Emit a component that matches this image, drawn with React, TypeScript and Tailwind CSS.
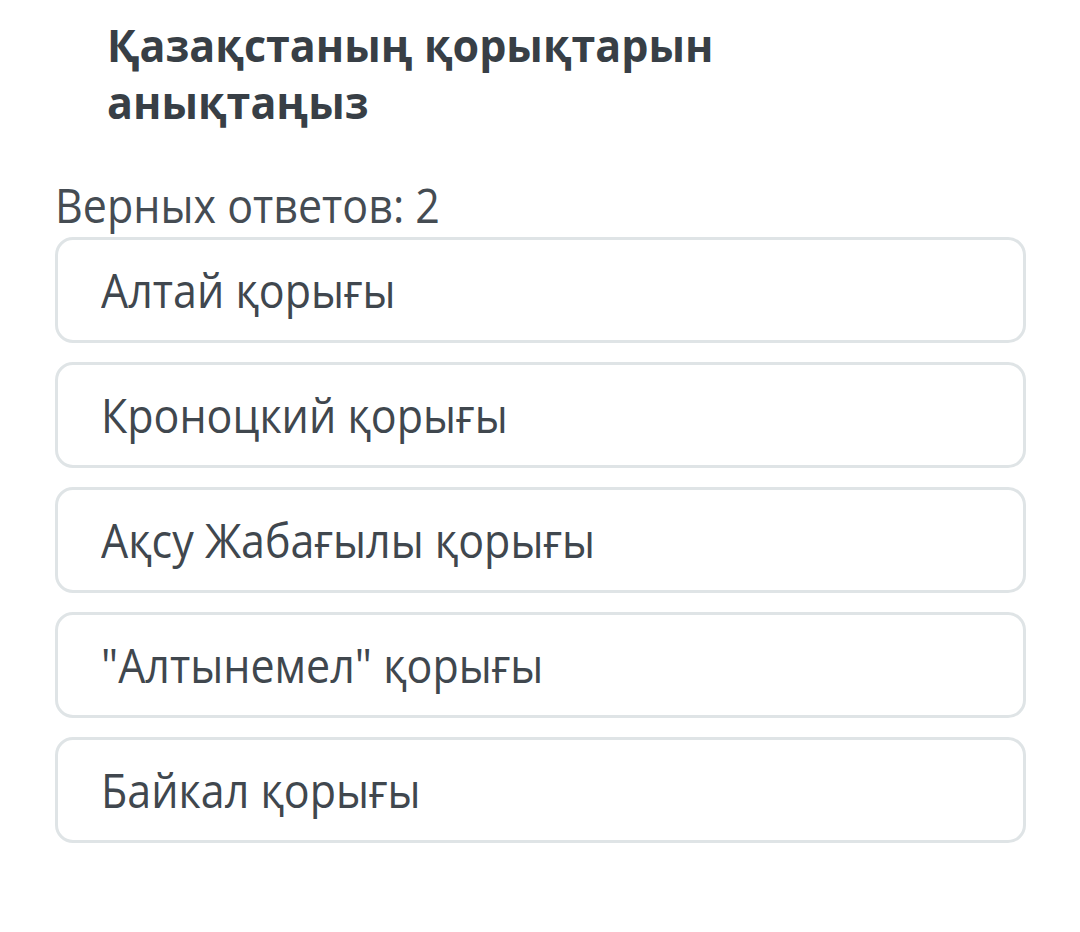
const options = [
  "Алтай қорығы",
  "Кроноцкий қорығы",
  "Ақсу Жабағылы қорығы",
  "\"Алтынемел\" қорығы",
  "Байкал қорығы",
];

export default function App() {
  return (
    <div
      className="min-h-[932px] w-[1080px] bg-white text-[#3c434a]"
      style={{ fontFamily: "'Open Sans', 'Noto Sans', sans-serif" }}
    >
      {/* Question */}
      <div className="pl-[107px] pt-[16px]">
        <h1 className="text-[43px] font-bold leading-[57px] text-[#383f46]">
          <span className="inline-block scale-y-[1.04]">Қазақстаның қорықтарын</span>
          <br />
          <span className="inline-block scale-y-[1.04]">анықтаңыз</span>
        </h1>
      </div>

      <p className="mt-[49px] pl-[55px] text-[43px] leading-[52px] text-[#454c53]">
        <span className="inline-block scale-y-[1.11]">Верных ответов: 2</span>
      </p>

      {/* Answers */}
      <div className="mt-[6px] flex w-[971px] flex-col gap-[19px] pl-[55px] box-content">
        {options.map((option) => (
          <div
            key={option}
            className="flex h-[106px] items-center rounded-[18px] border-[3px] border-[#dfe4e6] pl-[43px]"
          >
            <span className="inline-block scale-y-[1.11] text-[43px] text-[#40474e]">
              {option}
            </span>
          </div>
        ))}
      </div>
    </div>
  );
}
